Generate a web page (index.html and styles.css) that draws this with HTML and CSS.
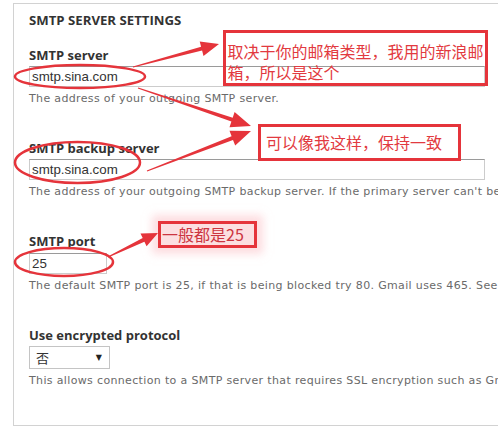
FILE: index.html
```html
<!DOCTYPE html>
<html lang="en">
<head>
<meta charset="utf-8">
<title>SMTP Server Settings</title>
<link rel="stylesheet" href="styles.css">
</head>
<body>
<div class="panel">
  <h2 class="heading">SMTP SERVER SETTINGS</h2>
  <div class="field first">
    <div class="label">SMTP server</div>
    <div class="input wide">smtp.sina.com</div>
    <div class="desc">The address of your outgoing SMTP server.</div>
  </div>
  <div class="field">
    <div class="label">SMTP backup server</div>
    <div class="input wide">smtp.sina.com</div>
    <div class="desc">The address of your outgoing SMTP backup server. If the primary server can't be found this one will be tried.</div>
  </div>
  <div class="field">
    <div class="label">SMTP port</div>
    <div class="input narrow">25</div>
    <div class="desc">The default SMTP port is 25, if that is being blocked try 80. Gmail uses 465. See the documentation.</div>
  </div>
  <div class="field">
    <div class="label">Use encrypted protocol</div>
    <div class="select"><span class="select-text">否</span><span class="select-arrow">▼</span></div>
    <div class="desc">This allows connection to a SMTP server that requires SSL encryption such as Gmail.</div>
  </div>
</div>

<div class="annot">
  <svg class="marks" width="498" height="432" viewBox="0 0 498 432">
    <g fill="none" stroke="#e5343b" stroke-width="2.5">
      <ellipse cx="80" cy="76.5" rx="65" ry="11.5"/>
      <ellipse cx="77.5" cy="162.5" rx="62.5" ry="20.5"/>
      <ellipse cx="64" cy="262" rx="49" ry="14"/>
    </g>
    <g fill="#e5343b">
      <polygon points="133.1,67.5 202.1,50.6 203.5,55.9 219,44 199.7,41.4 201.1,46.7 132.9,66.5"/>
      <polygon points="137.8,88.5 231.4,121.5 229.5,127.2 251,126 234.6,112.0 232.7,117.7 138.2,87.5"/>
      <polygon points="147.2,171.5 233.0,140.0 235.2,145.6 251,131 229.5,130.7 231.6,136.3 146.8,170.5"/>
    </g>
  </svg>
  <div class="note note1">取决于你的邮箱类型，我用的新浪邮箱，所以是这个</div>
  <div class="note note2">可以像我这样，保持一致</div>
  <div class="note note3">一般都是25</div>
  <svg class="marks" width="498" height="432" viewBox="0 0 498 432">
    <polygon fill="#e5343b" points="108.2,257.5 144.4,241.7 146.6,246.2 158,233 140.5,233.6 142.7,238.1 107.8,256.5"/>
  </svg>
</div>
</body>
</html>
```

FILE: styles.css
```css
html, body {
  margin: 0;
  padding: 0;
  background: #ffffff;
  overflow: hidden;
  width: 498px;
  height: 432px;
}

body {
  position: relative;
}

.panel {
  margin: 3px 0 0 13px;
  width: 700px;
  border: 1px solid #d2d2d2;
  padding: 6.5px 15px 35.8px 15px;
  box-sizing: content-box;
}

.heading {
  margin: 0;
  font-family: "Open Sans", "Liberation Sans", sans-serif;
  font-weight: 700;
  font-size: 13.2px;
  line-height: 18px;
  color: #333333;
}

.field {
  margin-top: 32.3px;
}

.field.first {
  margin-top: 17px;
}

.label {
  font-family: "Open Sans", "Liberation Sans", sans-serif;
  font-weight: 700;
  font-size: 13px;
  line-height: 18px;
  color: #333333;
  margin-bottom: 2.5px;
}

.input {
  box-sizing: border-box;
  height: 21px;
  border: 1px solid #cccccc;
  border-top-color: #9a9a9a;
  padding: 0 2px;
  font-family: "Liberation Sans", Arial, sans-serif;
  font-size: 13.3px;
  line-height: 19px;
  color: #333333;
  background: #ffffff;
}

.input.wide {
  width: 456px;
}

.input.narrow {
  width: 78px;
}

.select {
  box-sizing: border-box;
  width: 81px;
  height: 23px;
  border: 1px solid #c4c4c4;
  display: flex;
  align-items: center;
  justify-content: space-between;
  padding: 0 7px 0 6px;
  background: #ffffff;
}

.select-text {
  font-family: "Noto Sans CJK SC", sans-serif;
  font-size: 13px;
  line-height: 20px;
  color: #333333;
}

.select-arrow {
  font-family: "DejaVu Sans", sans-serif;
  font-size: 8px;
  line-height: 10px;
  color: #222222;
}

.desc {
  margin-top: 3.7px;
  font-family: "DejaVu Sans", Verdana, sans-serif;
  font-size: 11px;
  line-height: 16px;
  letter-spacing: 0.35px;
  color: #6a6a6a;
  white-space: nowrap;
}

.annot {
  position: absolute;
  left: 0;
  top: 0;
  width: 498px;
  height: 432px;
  pointer-events: none;
}

.marks {
  position: absolute;
  left: 0;
  top: 0;
}

.note {
  position: absolute;
  box-sizing: border-box;
  border: 3px solid #e5343b;
  font-family: "Noto Sans CJK SC", sans-serif;
  font-size: 16px;
  color: #e23a40;
}

.note1 {
  left: 223px;
  top: 30px;
  width: 265px;
  height: 56px;
  padding: 8px 0 0 1.5px;
  line-height: 20.5px;
}

.note2 {
  left: 258px;
  top: 124px;
  width: 203px;
  height: 37px;
  padding: 0 4px 0 5px;
  line-height: 31px;
  white-space: nowrap;
}

.note3 {
  left: 158px;
  top: 221px;
  width: 99px;
  height: 27px;
  padding: 0 0 0 1px;
  line-height: 21px;
  white-space: nowrap;
  color: #cc3440;
  background: rgba(250, 196, 200, 0.55);
  box-shadow: 0 0 8px 6px rgba(252, 200, 205, 0.6);
}
```
